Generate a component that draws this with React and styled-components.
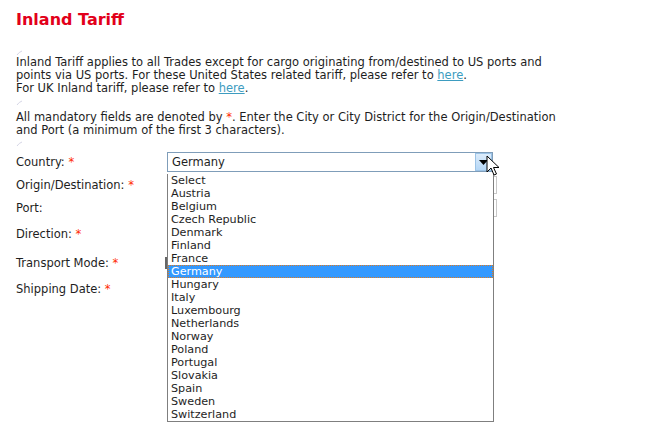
import React from 'react';
import styled, { createGlobalStyle } from 'styled-components';

const GlobalStyle = createGlobalStyle`
  html, body {
    margin: 0;
    padding: 0;
    background: #ffffff;
  }
  body {
    font-family: "DejaVu Sans", Verdana, sans-serif;
    font-size: 11.5px;
    color: #1e1e1e;
  }
`;

const Page = styled.div`
  position: relative;
  width: 650px;
  height: 440px;
  padding: 10px 0 0 16px;
  box-sizing: border-box;
  overflow: hidden;
`;

const Title = styled.h1`
  margin: 0;
  font-size: 16px;
  line-height: 19px;
  font-weight: bold;
  color: #e2001a;
`;

const Spacer = styled.div`
  height: ${({ h }) => h}px;
  display: flex;
  align-items: ${({ align }) => align || 'center'};
`;

const Text = styled.p`
  margin: 0;
  line-height: 13px;
  white-space: nowrap;
`;

const Link = styled.a`
  color: #3d9cc0;
  text-decoration: underline;
`;

const Star = styled.span`
  color: #ff2a00;
`;

const Form = styled.div`
  display: grid;
  grid-template-columns: 151px 330px;
`;

const Label = styled.div`
  height: ${({ h }) => h}px;
  display: flex;
  align-items: center;
  white-space: pre;
`;

const Field = styled.div`
  height: ${({ h }) => h}px;
  display: flex;
  align-items: center;
`;

const SelectBox = styled.div`
  position: relative;
  width: 326px;
  height: 20px;
  box-sizing: border-box;
  border: 1px solid #7f9db9;
  display: flex;
  align-items: center;
  padding-left: 4px;
`;

const DropButton = styled.div`
  position: absolute;
  right: 0;
  top: 0;
  width: 17px;
  height: 18px;
  box-sizing: border-box;
  border: 1px solid #9cc3e6;
  background: linear-gradient(#dcecfb, #b5d7f6);
  display: flex;
  align-items: center;
  justify-content: center;
`;

const Input = styled.div`
  width: 330px;
  height: ${({ h }) => h || 18}px;
  box-sizing: border-box;
  border: 1px solid #c8c8c8;
  background: #fff;
`;

const SmallBox = styled.div`
  width: 14px;
  height: 12px;
  margin-left: -2px;
  background: #666;
`;

const List = styled.ul`
  position: absolute;
  left: 167px;
  top: 174px;
  width: 327px;
  margin: 0;
  padding: 0;
  list-style: none;
  box-sizing: border-box;
  border: 1px solid #7f7f7f;
  border-top: 0;
  background: #fff;
  font-size: 11.2px;
  z-index: 2;
`;

const Option = styled.li`
  height: 13px;
  line-height: 13px;
  padding-left: 3px;
  box-sizing: border-box;
  color: ${({ selected }) => (selected ? '#ffffff' : '#1e1e1e')};
  background: ${({ selected }) => (selected ? '#3399ff' : 'transparent')};
  outline: ${({ selected }) => (selected ? '1px dotted #e07a1e' : 'none')};
  outline-offset: -1px;
`;

const Cursor = styled.svg`
  position: absolute;
  left: 486px;
  top: 155px;
  z-index: 3;
`;

const Mark = () => (
  <svg width="8" height="6" viewBox="0 0 8 6">
    <path d="M1 5 Q3 2 6 1" stroke="#d6d6e6" strokeWidth="1" fill="none" />
  </svg>
);

const countries = [
  'Select', 'Austria', 'Belgium', 'Czech Republic', 'Denmark', 'Finland',
  'France', 'Germany', 'Hungary', 'Italy', 'Luxembourg', 'Netherlands',
  'Norway', 'Poland', 'Portugal', 'Slovakia', 'Spain', 'Sweden', 'Switzerland',
];

const App = () => (
  <Page>
    <GlobalStyle />
    <Title>Inland Tariff</Title>
    <Spacer h={27} align="flex-end"><Mark /></Spacer>
    <Text>
      Inland Tariff applies to all Trades except for cargo originating from/destined to US ports and
      <br />
      points via US ports. For these United States related tariff, please refer to <Link href="#">here</Link>.
      <br />
      For UK Inland tariff, please refer to <Link href="#">here</Link>.
    </Text>
    <Spacer h={16}><Mark /></Spacer>
    <Text>
      All mandatory fields are denoted by <Star>*</Star>. Enter the City or City District for the Origin/Destination
      <br />
      and Port (a minimum of the first 3 characters).
    </Text>
    <Spacer h={13}><Mark /></Spacer>
    <Form>
      <Label h={24}>Country: <Star>*</Star></Label>
      <Field h={24}>
        <SelectBox>
          Germany
          <DropButton>
            <svg width="9" height="5" viewBox="0 0 9 5"><path d="M0 0 H9 L4.5 5 Z" fill="#000" /></svg>
          </DropButton>
        </SelectBox>
      </Field>
      <Label h={22}>Origin/Destination: <Star>*</Star></Label>
      <Field h={22}><Input /></Field>
      <Label h={24}>Port:</Label>
      <Field h={24}><Input /></Field>
      <Label h={28}>Direction: <Star>*</Star></Label>
      <Field h={28} />
      <Label h={30}>Transport Mode: <Star>*</Star></Label>
      <Field h={30}><SmallBox /></Field>
      <Label h={22}>Shipping Date: <Star>*</Star></Label>
      <Field h={22} />
    </Form>
    <List>
      {countries.map((c) => (
        <Option key={c} selected={c === 'Germany'}>{c}</Option>
      ))}
    </List>
    <Cursor width="14" height="22" viewBox="0 0 14 22">
      <path d="M1 1 L1 17 L5 13 L8 20 L10.5 19 L7.5 12.5 L13 12.5 Z" fill="#fff" stroke="#000" strokeWidth="1" strokeLinejoin="round" />
    </Cursor>
  </Page>
);

export default App;
